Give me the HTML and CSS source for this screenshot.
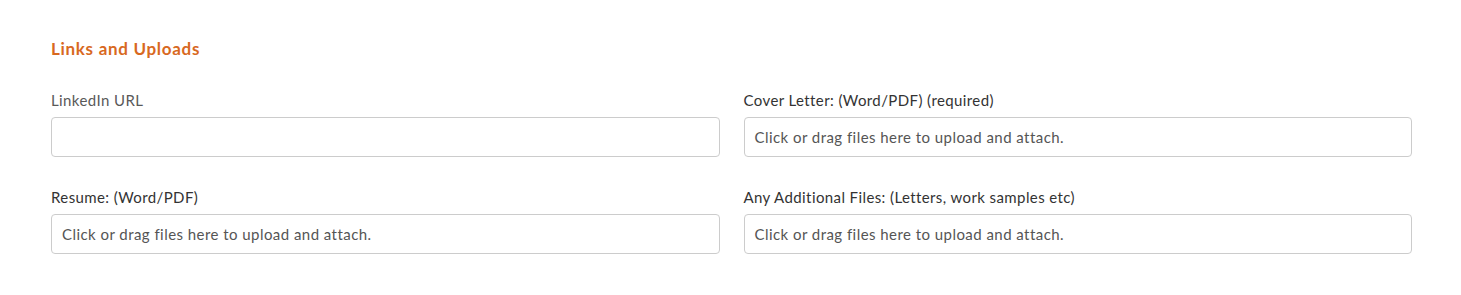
FILE: index.html
```html
<!DOCTYPE html>
<html lang="en">
<head>
<meta charset="UTF-8">
<meta name="viewport" content="width=device-width, initial-scale=1.0">
<title>Links and Uploads</title>
<link rel="stylesheet" href="styles.css">
</head>
<body>

<div class="section">
    <h3 class="sectionTitle">Links and Uploads</h3>

    <div class="fieldGrid">
        <div class="field">
            <label class="fieldLabel muted" for="linkedin">LinkedIn URL</label>
            <input type="text" id="linkedin" name="linkedin" class="textInput">
        </div>

        <div class="field">
            <div class="fieldLabel">Cover Letter: (Word/PDF) (required)</div>
            <div class="dropZone">Click or drag files here to upload and attach.</div>
        </div>

        <div class="field">
            <div class="fieldLabel">Resume: (Word/PDF)</div>
            <div class="dropZone">Click or drag files here to upload and attach.</div>
        </div>

        <div class="field">
            <div class="fieldLabel">Any Additional Files: (Letters, work samples etc)</div>
            <div class="dropZone">Click or drag files here to upload and attach.</div>
        </div>
    </div>
</div>

</body>
</html>
```

FILE: styles.css
```css
body {
    font-family: Lato, "Open Sans", Arial, sans-serif;
    margin: 0;
    padding: 0;
    background-color: white;
    color: #333;
}
.section {
    padding: 39px 49px 0 51px;
}
.sectionTitle {
    color: #d8691f;
    font-size: 17px;
    font-weight: bold;
    letter-spacing: 0.7px;
    line-height: 20px;
    margin: 0 0 31px;
}
.fieldGrid {
    display: grid;
    grid-template-columns: 1fr 1fr;
    column-gap: 24px;
    row-gap: 30px;
}
.fieldLabel {
    display: block;
    font-size: 15px;
    letter-spacing: 0.4px;
    line-height: 20px;
    margin-bottom: 7px;
    color: #333;
}
.fieldLabel.muted {
    color: #595959;
}
.textInput,
.dropZone {
    width: 100%;
    height: 40px;
    border: 1px solid #ccc;
    border-radius: 4px;
    box-sizing: border-box;
    padding: 0 10px;
    font-family: inherit;
    font-size: 15px;
    letter-spacing: 0.45px;
    color: #555;
    background-color: white;
}
.dropZone {
    display: flex;
    align-items: center;
    cursor: pointer;
}
```
